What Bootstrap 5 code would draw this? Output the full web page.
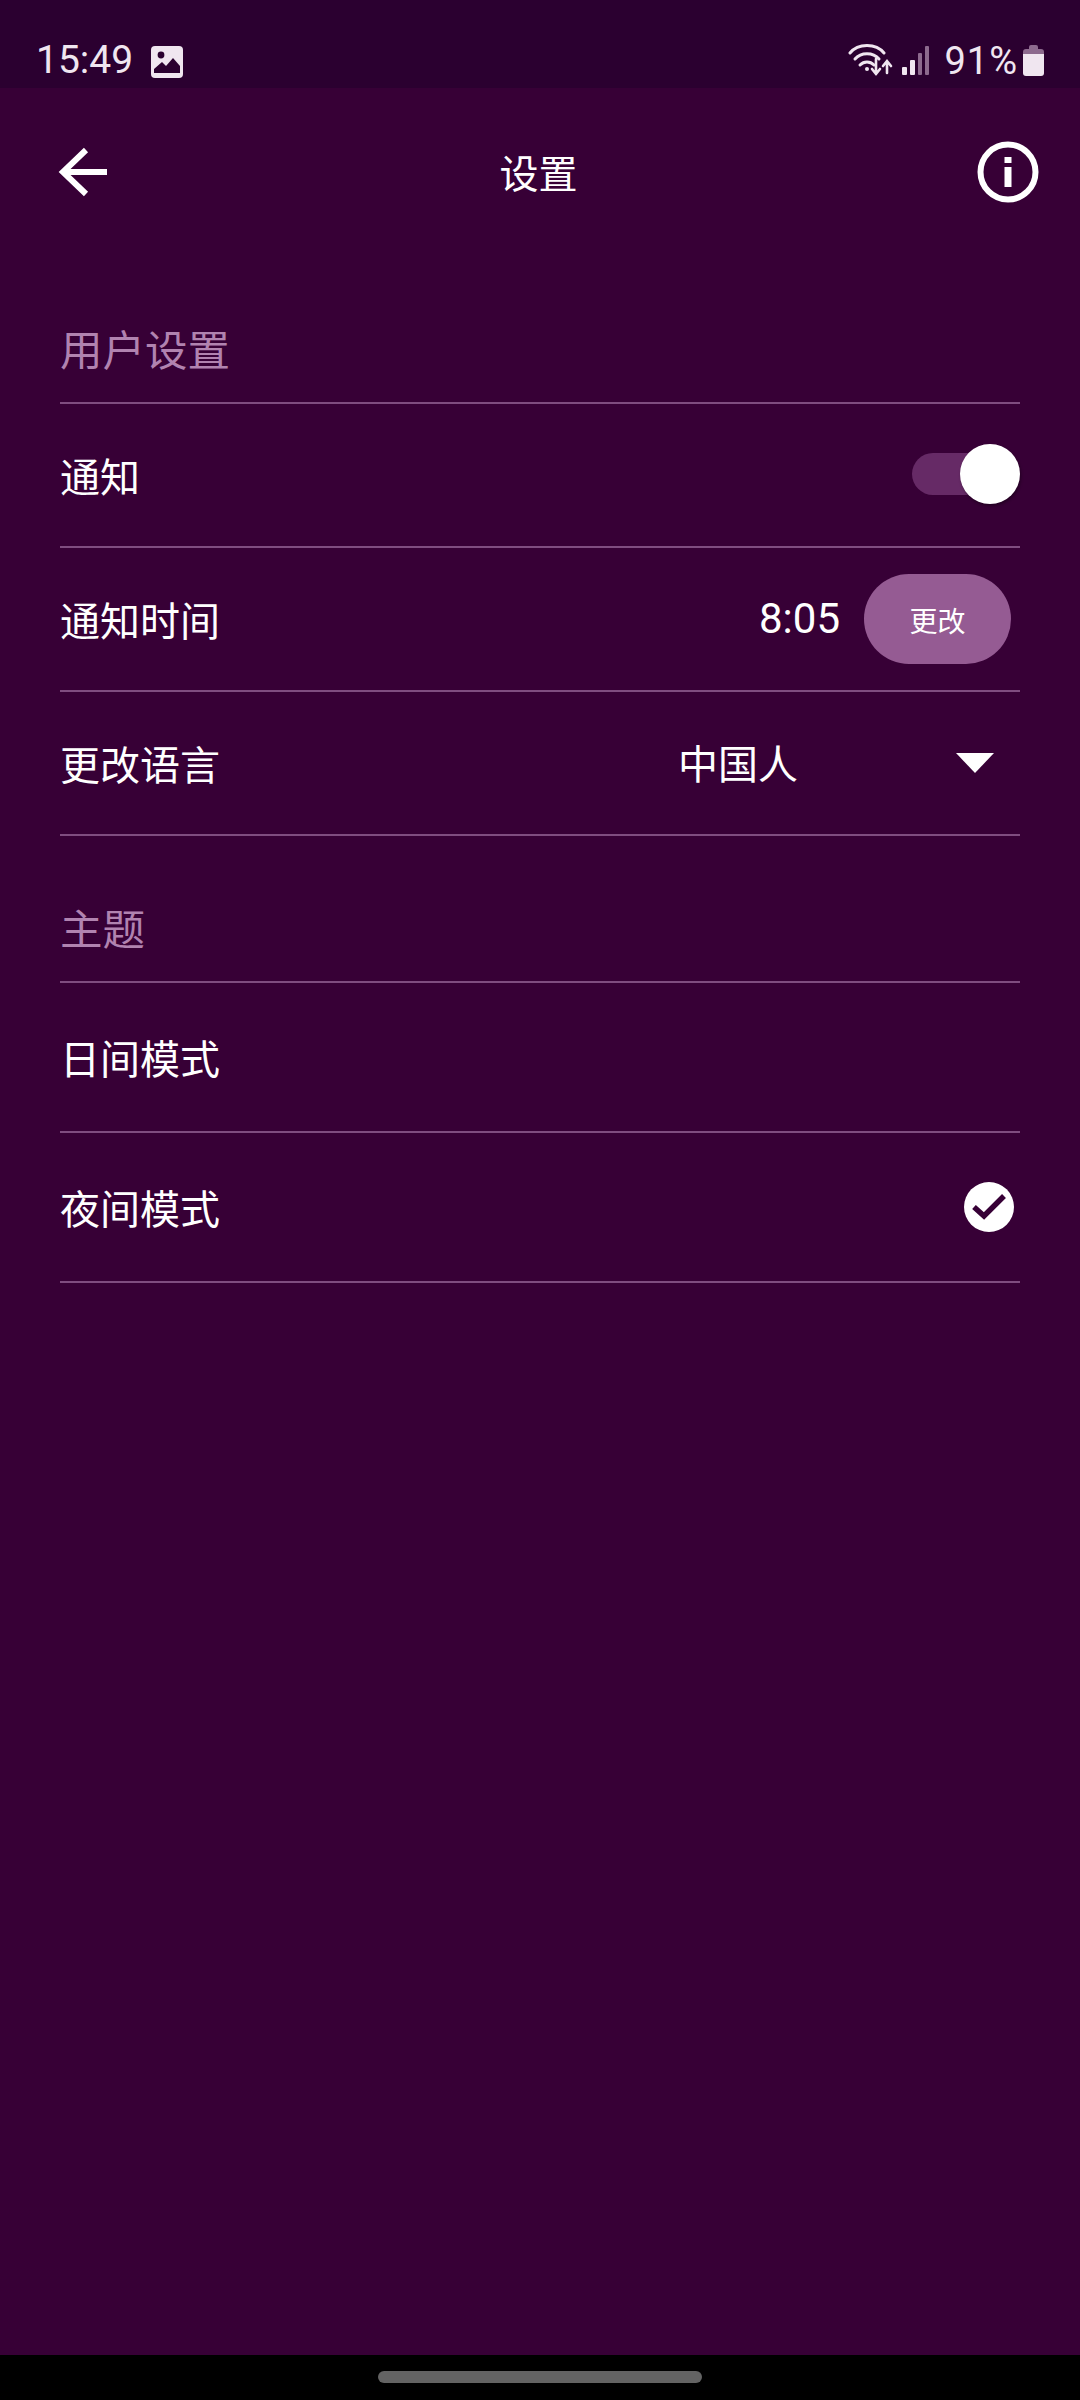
<!DOCTYPE html>
<html lang="zh-CN">
<head>
<meta charset="utf-8">
<title>设置</title>
<link href="https://cdn.jsdelivr.net/npm/bootstrap@5.3.0/dist/css/bootstrap.min.css" rel="stylesheet">
<style>
html, body { margin: 0; height: 2400px; }
body { width: 1080px; background: #370036; color: #fff; font-family: Roboto, "Noto Sans CJK SC", sans-serif; overflow: hidden; }
.status-strip { height: 88px; background: #2b0030; color: #f0e6f0; padding: 0 36px 0 36px; font-size: 39px; line-height: 1; }
.status-strip .clock { padding-top: 41px; width: 99px; }
.status-strip svg { display: block; }
.status-pct { letter-spacing: 1px; font-size: 38px; padding-top: 42px; margin: 0 5px 0 14px; }
.top-bar { height: 168px; padding: 0 41px 0 58px; }
.top-title { font-size: 39px; line-height: 1; padding-top: 6px; margin-right: 8px; }
.sect-head { font-size: 42.5px; line-height: 1; color: #b183b0; margin: 0 60px; border-bottom: 2px solid #7f4d80; }
.sect-one { height: 148px; padding-top: 75px; }
.sect-two { height: 147px; padding-top: 74px; }
.setting-list { margin: 0 60px; }
.setting-list .list-group-item, .setting-list .list-group-item:last-child { background: transparent; color: #fff; padding: 0; border-width: 0 0 2px; border-color: #7f4d80; border-style: solid; font-size: 40px; line-height: 1; }
.setting-list .list-group-item > span:first-child { margin-top: 7px; }
.row-short { height: 144px; }
.row-tall { height: 150px; }
.toggle-track { width: 108px; height: 60px; position: relative; margin-top: -3px; }
.toggle-track::before { content: ""; position: absolute; left: 0; right: 20px; top: 9px; height: 42px; border-radius: 21px; background: #662a66; }
.toggle-thumb { position: absolute; right: 0; top: 0; width: 60px; height: 60px; border-radius: 50%; background: #fff; box-shadow: 1px 2px 3px rgba(0,0,0,.35); }
.time-value { font-size: 42px; margin-right: 24px; margin-top: 0; }
.change-btn.btn { width: 147px; height: 90px; border: 0; border-radius: 45px; background: #955b93; color: #fff; font-size: 28px; line-height: 1; padding: 7px 0 0; margin: 0 9px 0 0; }
.lang-value { width: 278px; font-size: 40px; margin-top: 5px; }
.lang-picker { margin-right: 26px; margin-top: 0; }
.check-mark { margin: -1px 6px 0 0; }
.nav-strip { height: 45px; background: #000; }
.nav-pill { width: 324px; height: 12px; border-radius: 6px; background: #636363; }
</style>
</head>
<body class="d-flex flex-column">
<header class="status-strip d-flex justify-content-between flex-shrink-0">
  <div class="d-flex">
    <div class="clock">15:49</div>
    <svg class="ms-3" style="margin-top:46px" width="32" height="32" viewBox="0 0 32 32"><rect width="32" height="32" rx="4" fill="#f0e6f0"/><path d="M3 27 V23 L11 16 L15 20 L22 12 L29 20 V27 Z" fill="#2b0030"/><circle cx="10" cy="9" r="3.4" fill="#2b0030"/></svg>
  </div>
  <div class="d-flex">
    <svg style="margin-top:42px" width="46" height="36" viewBox="0 0 46 36" fill="none" stroke="#f0e6f0" stroke-width="3" stroke-linecap="round"><path d="M2 11 C10 1 28 1 36 11"/><path d="M7 17 C13 10 25 10 31 17"/><path d="M12 23 C16 19 22 19 26 23"/><circle cx="19" cy="27" r="2" fill="#f0e6f0" stroke="none"/><path d="M28 17 V32 M24 27 L28 32 L32 27" stroke-width="2.6"/><path d="M39 31 V20 M35 24 L39 19 L43 24" stroke-width="2.6"/></svg>
    <svg class="ms-2" style="margin-top:46px" width="28" height="30" viewBox="0 0 28 30"><rect x="0" y="21" width="5" height="8" rx="1" fill="#f0e6f0"/><rect x="8" y="14" width="5" height="15" rx="1" fill="#f0e6f0"/><rect x="16" y="7" width="4" height="22" rx="1" fill="#8d6a8e"/><rect x="23" y="0" width="4" height="29" rx="1" fill="#8d6a8e"/></svg>
    <div class="status-pct">91%</div>
    <svg style="margin-top:45px" width="21" height="32" viewBox="0 0 21 32"><path d="M6 4 V2 Q6 0 8 0 H13 Q15 0 15 2 V4 H18 Q21 4 21 7 V9 H0 V7 Q0 4 3 4 Z" fill="#8d6a8e"/><path d="M0 9 H21 V28 Q21 31 18 31 H3 Q0 31 0 28 Z" fill="#f0e6f0"/></svg>
  </div>
</header>

<nav class="top-bar d-flex justify-content-between align-items-center flex-shrink-0">
  <svg width="50" height="50" viewBox="0 0 50 50" fill="none" stroke="#fff" stroke-width="6"><path d="M49 25 H5"/><path d="M28 3 L5 25 L28 47"/></svg>
  <div class="top-title">设置</div>
  <svg width="62" height="62" viewBox="0 0 62 62"><circle cx="31" cy="31" r="27.5" fill="none" stroke="#fff" stroke-width="6"/><rect x="27.5" y="16" width="7" height="6" fill="#fff"/><rect x="27.5" y="26" width="7" height="20" fill="#fff"/></svg>
</nav>

<main class="flex-grow-1">
  <div class="sect-head sect-one">用户设置</div>
  <div class="list-group list-group-flush rounded-0 setting-list">
    <div class="list-group-item row-short d-flex justify-content-between align-items-center">
      <span>通知</span>
      <div class="toggle-track"><div class="toggle-thumb"></div></div>
    </div>
    <div class="list-group-item row-short d-flex align-items-center">
      <span class="me-auto">通知时间</span>
      <span class="time-value">8:05</span>
      <button type="button" class="btn change-btn">更改</button>
    </div>
    <div class="list-group-item row-short d-flex align-items-center">
      <span class="me-auto">更改语言</span>
      <span class="lang-value">中国人</span>
      <svg class="lang-picker" width="38" height="20" viewBox="0 0 38 20"><path d="M0 0 H38 L19 20 Z" fill="#fff"/></svg>
    </div>
  </div>
  <div class="sect-head sect-two">主题</div>
  <div class="list-group list-group-flush rounded-0 setting-list">
    <div class="list-group-item row-tall d-flex align-items-center"><span>日间模式</span></div>
    <div class="list-group-item row-tall d-flex justify-content-between align-items-center">
      <span>夜间模式</span>
      <svg class="check-mark" width="50" height="50" viewBox="0 0 50 50"><circle cx="25" cy="25" r="25" fill="#fff"/><path d="M10 25 L20 34 L40 14" fill="none" stroke="#370036" stroke-width="5.5"/></svg>
    </div>
  </div>
</main>

<footer class="nav-strip d-flex justify-content-center flex-shrink-0 pt-3">
  <div class="nav-pill"></div>
</footer>
</body>
</html>
